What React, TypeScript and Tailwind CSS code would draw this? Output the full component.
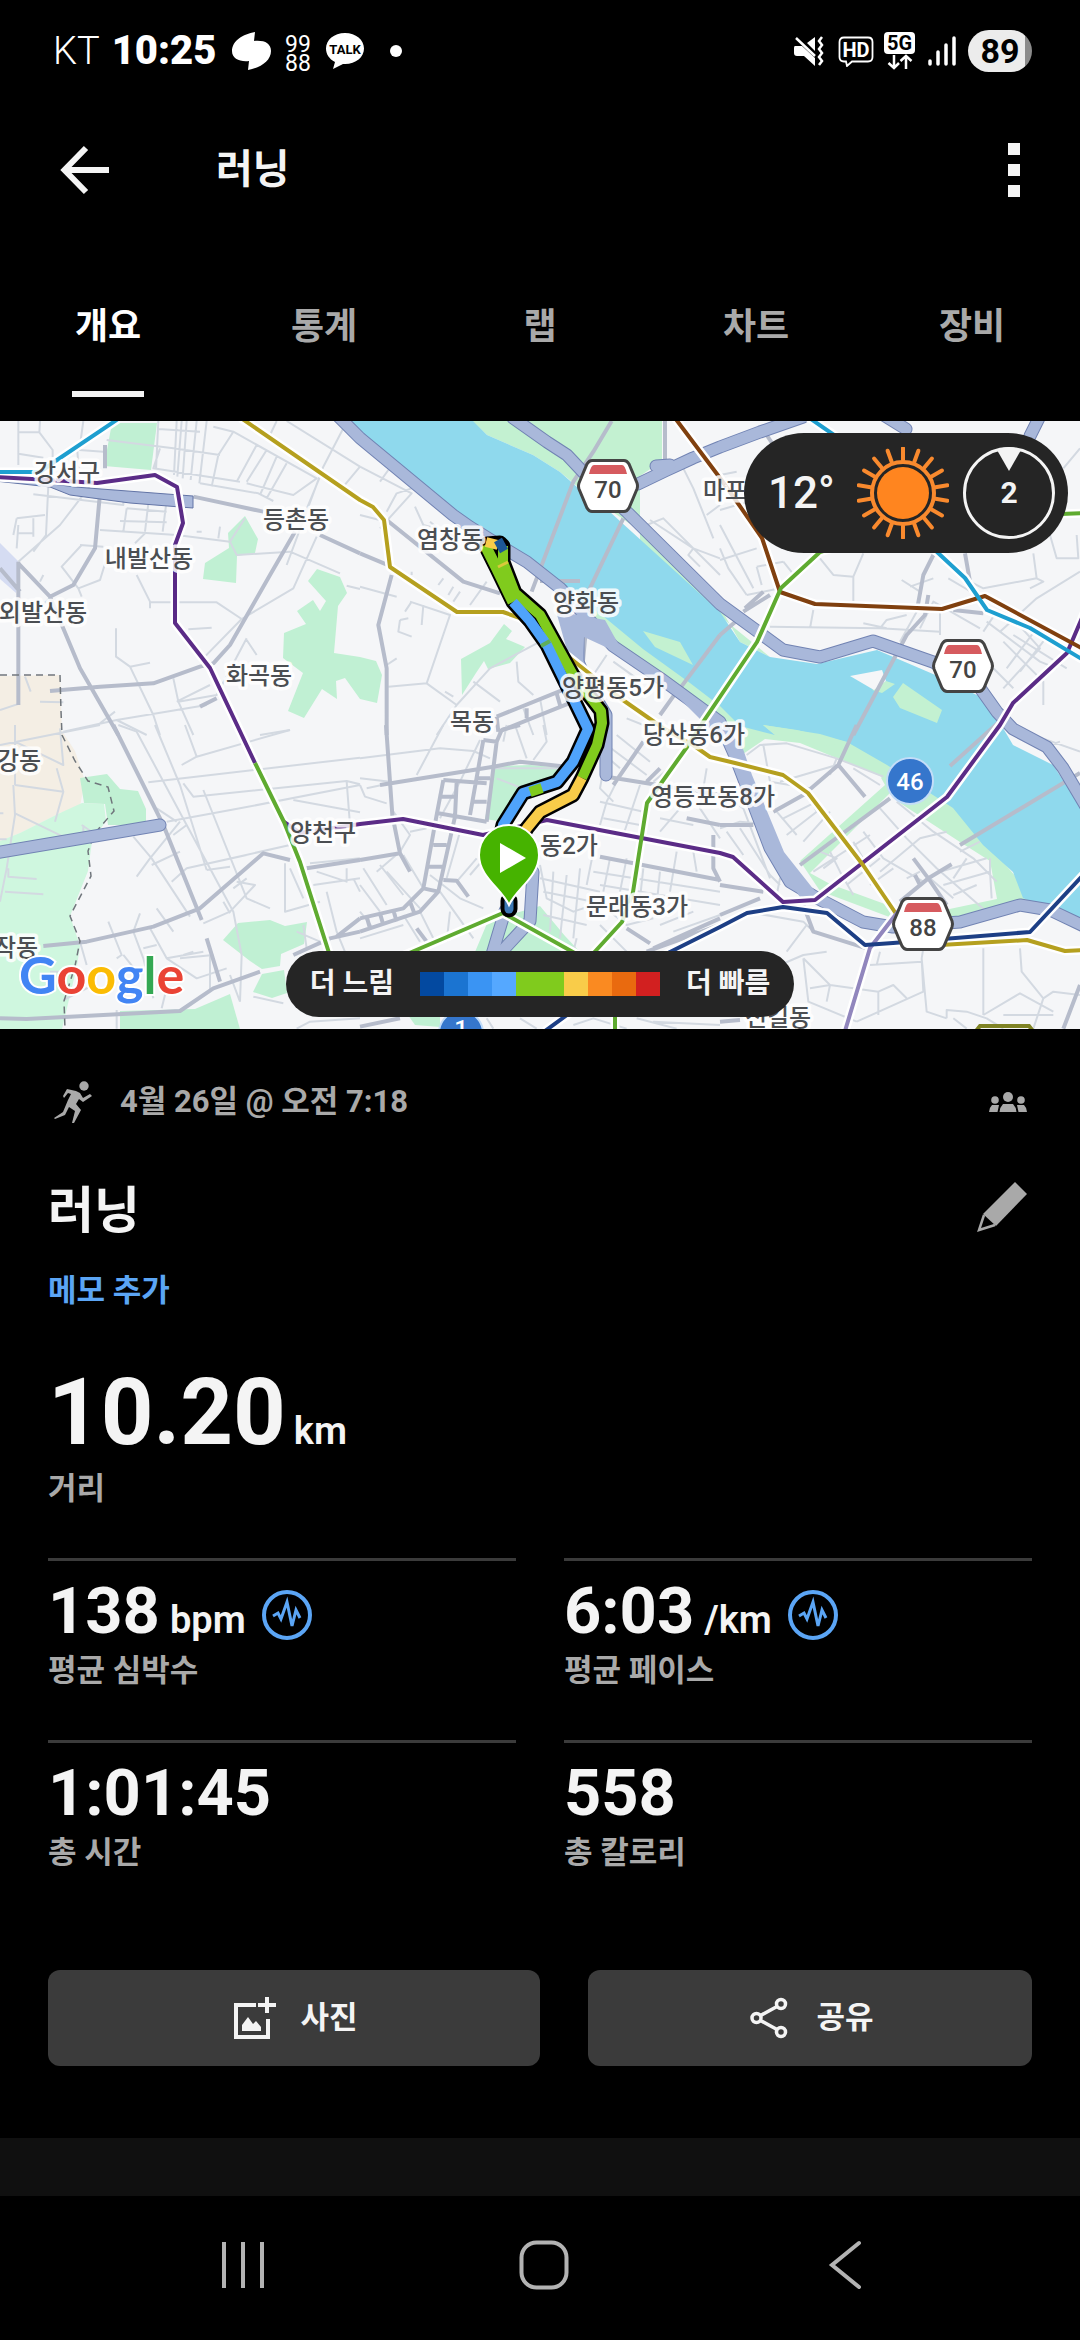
import { useState } from "react";

const TABS = ["개요", "통계", "랩", "차트", "장비"];

const PACE_COLORS = [
  "bg-[#0349a0]",
  "bg-[#1b74d1]",
  "bg-[#3a94f3]",
  "bg-[#55a8ff]",
  "bg-[#80cb1d]",
  "bg-[#80cb1d]",
  "bg-[#f9cc49]",
  "bg-[#fa8a21]",
  "bg-[#e96a0f]",
  "bg-[#d22020]",
];

const STATS = [
  { value: "138", unit: "bpm", label: "평균 심박수", graph: true },
  { value: "6:03", unit: "/km", label: "평균 페이스", graph: true },
  { value: "1:01:45", unit: "", label: "총 시간", graph: false },
  { value: "558", unit: "", label: "총 칼로리", graph: false },
];

// Road data is stored per map tile. Every tile is 1080 units wide and drawn at a third of that.
type Tile = { x: number; y: number; minor: string; major: string };

const TILES: Tile[] = [
  {
    x: 0,
    y: -6,
    minor:
      "M55 18V150 M120 18L118 52L158 105V140 M55 52H118 M55 116L130 128 M250 18L238 105L310 110 M232 108L236 160 M475 18L468 165 M475 42L600 50 M320 75L520 100L660 120 M530 18L522 180 M545 18L532 185 M560 18L548 190 M590 18L572 195 M620 18L598 205 M640 35L700 50L655 120L635 215 M600 205L775 235L820 258 M700 50L950 190L880 240L740 205 M770 90L710 200 M800 105L740 200 M830 125L780 240 M860 145L800 250 M830 18L810 60 M860 18L1080 155 M1030 40L970 155L860 450 M1080 155L1030 215 M960 185L900 330 M480 100L460 160L720 200 M100 238L370 270V235 M145 210L138 360L100 410 M50 310L135 300 M50 310L40 360 M55 330L50 400 M100 310V365 M55 355H100 M280 200L180 330L55 440 M380 280L370 350 M380 280L500 290 M445 265L435 350 M500 255L488 350 M300 345L530 360L690 380L710 420L870 410L1020 475 M360 318L500 322 M435 355L405 385 M590 350H605 M660 335L655 370 M690 380L735 310 M245 390L185 455L235 520L300 495L320 430 M240 390L310 395 M235 520L245 545 M120 500L130 480 M410 480L450 560V580 M450 562L650 562L725 612L880 520L950 365 M725 612L600 740 M348 640V725L390 755L460 900L480 960 M390 755L450 743 M565 643L635 638 M740 675L770 720 M520 790L535 860L580 960 M530 860L630 810 M535 860L650 840L740 670 M190 950L350 915L410 945L440 960 M350 915L620 870 M300 925L345 890 M1040 512L1080 522 M120 860L190 862 M780 960L870 945 M0 885L60 865 M75 785L92 830 M85 610L160 540",
    major:
      "M580 245L790 290 M885 350L810 480L690 690L640 745L600 755L460 805L300 815L150 828 M300 235L285 400L220 510L150 545 M55 440V870 M55 445L150 545L240 760L355 960 M0 460L60 530 M960 360L1080 415 M315 90V160 M600 875L650 850",
  },
  {
    x: 360,
    y: -6,
    minor:
      "M0 155L155 235L60 340 M85 165L60 200 M155 220L110 235L80 290 M165 275L190 330L245 345 M0 300L80 320 M0 515L110 545 M210 320L240 345L330 385 M150 560L270 600L200 805L85 815 M190 570L185 630 M155 560L135 590 M120 615L115 650L155 665 M120 615L145 610 M235 510L250 490 M265 540L280 515 M280 560L300 530 M330 570L380 500 M155 480V470 M200 805L290 870L390 760L540 680 M470 740L475 800L520 840 M340 800L420 860 M80 750L110 730 M255 830L280 845 M290 870L230 960 M870 315L1000 400L985 420L1020 455 M860 330L910 310L1080 480 M970 160L1000 220L1060 370 M1040 300L1080 270 M1000 400L1080 430 M740 720L700 780 M760 740L830 790 M540 850L560 960 M490 880L520 960 M800 910L850 930L880 960",
    major:
      "M95 480L55 630L80 760V960 M80 315L310 500L420 535 M0 415L95 455 M410 905L620 820 M415 950L640 860 M410 905L415 950 M500 880V910 M590 835L600 870 M755 18L700 110L640 200L515 530 M790 310L685 530 M1080 660L960 820 M915 18V140 M680 620L665 780 M950 830L900 900",
  },
  {
    x: 720,
    y: -6,
    minor:
      "M0 180L50 170 M0 285L80 262 M0 400L25 460L80 540 M0 330L100 520 M0 435L110 400 M80 540L180 520 M110 455L125 510 M110 455L190 440 M300 430L340 480L400 485V560 M430 415L400 485 M190 440L230 490 M280 585L270 640 M150 635L480 640L660 650 M480 640L500 615L560 600 M430 625L500 640 M590 590L540 680 M545 495L600 530 M570 515L640 490 M600 640L640 560L780 640 M660 590V660 M830 590L790 650 M800 620L960 740L1010 760 M870 600L960 700L850 820 M950 640L860 760 M1000 640L900 770 M850 680L970 800V870 M880 660L1040 760 M820 760L880 820 M990 360L1010 430L1075 430L1070 360 M940 415L950 490L790 520L750 500 M950 490L970 500L930 520 M685 490L770 540 M1030 160L1080 100 M840 650L950 550L1080 470",
    major:
      "M640 420L610 480L590 590 M625 540L615 600L560 660L400 960 M735 415L750 500L770 540 M700 585L790 595 M140 60L160 90 M70 590L150 540 M75 580L130 530 M0 660L70 600",
  },
  {
    x: 0,
    y: 304,
    minor:
      "M355 0L410 20L560 300L700 560L725 690L720 830 M465 0L540 180L620 435 M555 0L590 95L870 15 M545 120L590 95 M445 172L1080 98 M550 175L580 215L1040 168L1080 178 M500 290L720 250L1080 180 M880 225L1080 262 M1040 170L1050 300 M470 250L530 290 M560 300L520 330 M540 290L450 400L410 455 M560 430L870 360 M620 435L690 425 M400 335L455 400L570 575 M455 420L540 380 M515 470L560 430L740 390 M610 195L740 520L810 550 M710 470L765 480L690 560L610 595 M670 530L690 565 M740 460L700 490 M855 415V560L960 530 M870 430L910 520 M940 480L1080 460 M1040 430V470L950 440 M1080 400L930 415 M0 60L300 0 M45 0V180 M40 180L45 270L20 430L0 530 M45 50L190 120L180 10 M45 180L190 200L170 130 M45 265L200 340 M190 200L165 290 M0 265H10 M0 343H20 M25 430V455L110 462 M15 500L130 508 M245 300L290 330 M250 300V350 M325 590L365 690L350 700 M400 620L420 565 M400 620L430 700L460 820 M470 550L520 620 M450 610L500 700L590 760L680 730 M500 700L610 680 M370 690L410 740 M430 670L470 660 M550 690L580 680 M630 690V800 M540 700L640 690 M690 750L720 830 M350 855V911 M150 740L180 740 M190 825L280 780 M485 850L500 790 M760 815L850 835 M980 500L1010 620L1080 790 M910 600L920 670 M890 620L960 650 M1060 460L1080 500 M240 650L260 720 M890 911L930 890L1080 880",
    major:
      "M340 0L490 300L605 585 M130 663L260 650L460 605L600 550L790 385L870 405 M920 430L1080 405 M0 880L80 882L540 858L640 790L780 740 M880 690L990 640L1080 620 M1010 635L1080 580 M620 640L660 770",
  },
  {
    x: 360,
    y: 304,
    minor:
      "M0 100L240 70L340 78L390 100 M250 0L170 150 M0 180L15 215L80 235 M20 190L90 175 M100 260L150 330L120 380L50 440 M360 45L300 170L240 280 M0 160L90 170 M400 130L620 130 M410 160L500 195 M550 0L560 50L520 105 M440 0L430 50 M465 0L500 100 M150 320L200 310 M60 420L130 510 M10 430L80 540 M130 390L190 490 M80 440L180 550 M210 450L300 520L370 550 M330 450L390 380 M290 470L350 400 M260 460L300 320L400 350 M240 500L340 640 M180 560L230 660 M130 570L180 650 M0 480L60 560 M0 640L130 600 M270 560L260 650 M740 60L860 150 M770 30L870 110 M700 60L780 130 M740 80L720 190L760 230 M790 130L740 230L720 300 M840 180L790 330 M720 230L850 260 M730 280L840 300 M540 420L560 520L640 560L700 540 M580 440L570 620 M620 450L600 640 M660 430L640 640 M540 460L720 500 M550 500L700 530 M550 570L680 600 M700 380L680 480 M750 400L730 500 M800 400L780 500 M850 430L840 520 M900 440L890 540 M700 440L1080 500 M720 480L1080 540 M950 380L930 500 M1000 380L1010 440 M1040 130L1020 250L1080 340 M880 170L950 110 M900 280L1000 300 M960 250L900 320 M750 560L800 600L880 580 M900 600L1000 560 M940 620L1080 570 M650 640L640 680 M720 600L800 680 M0 560L40 610 M640 900L700 880L800 911 M830 880L950 911 M880 890L1080 900 M380 880L400 911 M480 880L530 911",
    major:
      "M78 0L97 270L120 385L150 440 M0 405L120 385 M60 180L400 125L480 110L620 125 M370 45L330 270 M410 50L380 290 M370 45L410 50 M425 15L410 50 M425 15L480 0 M350 160H390 M335 230H380 M250 165L230 270L190 490 M290 170L285 275L235 500 M250 165L380 175 M235 265L380 290 M235 215H290 M220 360H260 M205 425H250 M190 490L235 500L180 560L0 620 M190 490L130 550L0 580 M20 575L30 610 M60 565L70 600 M100 555L110 590 M150 530L165 570 M250 465L290 467L325 515 M720 395L1080 465 M740 155L1080 210 M850 50L760 180 M1060 330V430L1080 470 M880 670L1080 580 M800 610L870 655 M860 680L1080 600 M980 280L1080 300 M860 170L900 130 M0 905L120 880 M170 610L200 650",
  },
  {
    x: 720,
    y: 304,
    minor:
      "M80 90L120 60L200 55L350 100L490 155 M130 60L150 170L270 190 M180 170L350 120 M350 100L330 150 M400 130L480 180 M170 260L230 330 M190 280L290 230 M200 330L290 260L270 220 M250 350L330 260 M280 440L450 330 M330 380L360 440L400 510 M310 430L350 400L300 380 M400 350L470 470 M430 320L490 400L610 470 M480 250L560 340L650 430L800 560 M530 230L640 320L760 400L830 470 M380 480L480 400 M480 440L600 340L680 320 M450 480L520 430 M720 380L780 350 M560 460L600 440 M630 460L700 520 M660 440L800 400 M670 480L810 440L815 520 M740 400L700 460 M810 400V440 M700 510L770 480 M0 310L60 290L110 295 M20 320L70 390 M60 310L150 450L180 480 M0 200L70 250L150 460 M80 560L250 590L270 610 M250 700L330 780L475 800V870 M250 700L265 830L410 890 M180 720L250 690L320 680 M270 790L330 780L320 830 M475 800L520 780L560 820 M410 890L610 800L605 700L620 860L680 880 M450 720L605 710 M480 680L470 720 M610 670L605 700 M790 670V870 M900 670L905 740L970 820L940 911 M790 870L900 805L1000 860 M680 880V855L740 860L800 880L850 911 M970 820L1000 800L1080 810 M850 870L1000 870 M700 880L740 911 M170 510L180 460L220 470 M200 680L260 600 M910 20L1080 80 M960 70L1020 50",
    major:
      "M240 420L510 220 M410 0L355 120L435 215 M355 120L250 210L160 260 M580 400L625 460L680 540 M625 460L695 418 M585 450L600 480 M0 300L100 300 M0 480L130 500 M0 570L120 520 M270 600L280 620L440 670 M625 460L540 530 M1080 780L1030 911 M0 890L60 885 M250 540L280 620",
  },
];

const HIGHWAYS = [
  "M335 -8L360 17L453 94L470 106L507 129L527 141L560 167L593 203L613 225L660 257L720 301L735 335L770 427L790 461L817 477L863 501L893 506L960 501L1020 484L1050 489L1090 508",
  "M513 -3L547 21L567 34L583 51L627 91L720 183L753 207L783 229L820 236L873 220L933 241L980 267L997 291L1013 308L1047 326L1063 347L1085 384",
  "M638 63L665 50L693 37L720 26L760 11L803 -4",
  "M656 45L670 44",
  "M578 216L578 241L592 271L606 294V354",
  "M1030 15L1040 -5",
  "M885 -5L906 8",
  "M-5 432L160 404",
  "M533 451L530 500L493 540",
  "M505 490L490 540",
];

const SUBWAYS: { d: string; color: string }[] = [
  { d: "M-5 56L50 59L97 62L155 54L177 66L183 102L175 124V202L210 247L255 342", color: "#5b2c87" },
  { d: "M-5 51H40L57 39L118 -2", color: "#1e9fd0" },
  { d: "M284 401L300 412L360 403L403 398L483 414L547 399L720 432L733 436L783 481L815 479L947 376L1000 304L1013 282L1067 232L1085 190", color: "#5b2c87" },
  { d: "M255 342L284 401L300 441L330 535", color: "#5fab30" },
  { d: "M241 -3L360 79L373 86L384 99L390 146L457 191H503L520 197L620 277L663 307L693 324L710 336L735 342L783 354L808 372L863 444L903 503", color: "#b5a01f" },
  { d: "M923 525L1027 519L1065 530L1085 529", color: "#b5a01f" },
  { d: "M675 -3L720 57L737 81L762 117L780 171L815 183L942 188L985 175L1085 229", color: "#80400f" },
  { d: "M808 -4L850 25L937 131L965 157L987 189L1030 207L1085 240", color: "#1e9fd0" },
  { d: "M1085 92L930 98L820 131L781 167L757 221L703 301L687 326L662 361L647 382L633 471L622 501L590 536", color: "#5fab30" },
  { d: "M400 536L503 492L580 535", color: "#5fab30" },
  { d: "M615 590V610", color: "#5fab30" },
  { d: "M845 610L870 527L900 488", color: "#9186bd" },
  { d: "M545 610L567 594L670 531L720 506L747 492L783 486L827 492L865 524L893 522L1030 511L1085 452", color: "#1d3f85" },
];

const PLACES: [string, number, number][] = [
  ["강서구", 67, 60],
  ["등촌동", 296, 107],
  ["내발산동", 149, 146],
  ["외발산동", 43, 200],
  ["화곡동", 259, 263],
  ["염창동", 450, 127],
  ["양화동", 586, 190],
  ["양평동5가", 613, 275],
  ["목동", 472, 309],
  ["당산동6가", 694, 322],
  ["영등포동8가", 713, 384],
  ["동2가", 569, 433],
  ["문래동3가", 637, 494],
  ["양천구", 323, 420],
  ["강동", 19, 348],
  ["작동", 16, 535],
  ["신길동", 778, 605],
  ["마포구", 736, 78],
];

function Shield({ x, y, label }: { x: number; y: number; label: string }) {
  return (
    <g transform={`translate(${x} ${y})`}>
      <path
        d="M-16 -25.500H16Q19 -25.500 21 -22L29 -3Q30 0 29 3L21 22Q19 25.500 16 25.500H-16Q-19 25.500 -21 22L-29 3Q-30 0 -29 -3L-21 -22Q-19 -25.500 -16 -25.500Z"
        fill="#fff"
        stroke="#444"
        strokeWidth="3"
      />
      <path d="M-14 -21H14Q17 -21 19 -12H-19Q-17 -21 -14 -21Z" fill="#d65b5f" />
      <text y="12" textAnchor="middle" fontSize="24" fontWeight="500" fill="#444">
        {label}
      </text>
    </g>
  );
}

function RouteMap() {
  return (
    <svg
      viewBox="0 0 1080 608"
      preserveAspectRatio="xMidYMid slice"
      className="h-full w-full"
      role="img"
      aria-label="러닝 경로"
    >
      <rect width="1080" height="608" fill="#f5f6f8" />

      {/* Land use */}
      <path d="M0 255L60 254L62 310L75 330L85 360L80 385L60 392L20 412L0 420Z" fill="#f4eee4" />
      <path d="M0 420L20 412L60 392L82 382L104 383L106 400L92 420L88 450L70 495L80 525L77 545L62 608H0Z" fill="#cff7df" />
      <path d="M80 357L107 353L120 368L138 370L146 388L146 404L108 404L105 383L84 382Z" fill="#c0f0d3" />
      <path d="M0 122L18 140L16 172L0 158Z" fill="#d5dcf2" />
      <g fill="#c0f0d3">
        <path d="M112 2H157L151 49L104 45Z" />
        <path d="M245 95L258 118L255 132L237 135L236 162L203 158L205 142L229 127L228 112Z" />
        <path d="M317 148L340 156L347 172L338 185L334 232L360 236V278L345 257L336 260L337 278L322 268L304 297L288 290L303 252L283 237L284 212L306 203L297 190L313 179L320 190L326 180L308 160Z" />
        <path d="M360 236L376 240L382 254L377 282L360 278Z" />
        <path d="M504 203L512 210L506 218L525 226L510 242L488 248L484 240L476 252L462 274L461 238L490 222Z" />
        <path d="M495 345L530 344L565 347L545 365L520 366L498 400L485 398Z" />
        <path d="M223 519L238 502L270 499L285 505L307 501L304 523L281 533L280 545L262 548L250 540Z" />
        <path d="M262 553L284 549L287 572L272 577L253 571Z" />
        <path d="M120 608V590L195 588L230 573L240 608Z" />
        <path d="M408 594L440 594L440 606L415 604Z" />
        <path d="M488 500L540 485L565 515L580 531H475Z" />
      </g>
      <path d="M472 0L487 14L533 34L560 51L583 70L640 110L720 186L740 221L770 236L640 130L640 55L662 40V0Z" fill="#c3f1d1" />
      <path d="M750 290L797 290L860 315L940 355L985 420L1035 478L960 500L900 500L820 470L800 440L885 364L880 355L800 322L765 318L740 335Z" fill="#c3f1d1" />
      <path d="M360 10L480 100L470 108Z M540 150L600 190L720 280L760 310L720 300L600 215Z" fill="#c3f1d1" />
      <path d="M755 328L770 321H788L837 337L882 356L868 366L800 422L775 380Z M810 452L890 372L900 382L960 421L990 440L997 478L940 490L893 486L830 463Z" fill="#f5f6f8" />

      {/* River */}
      <path
        d="M346 -2H471L487 14L533 34L560 51L577 66L610 91L643 121L720 191L740 221L770 236L817 243L877 229L933 253L983 277L1003 307L1013 324L1053 344L1082 388V503L1023 477L1013 451L983 424L953 387L933 374L887 344L847 321L797 309L763 304L775 314L740 305L720 285L690 262L643 228L603 195L567 171L540 154L507 127L470 104L420 61Z"
        fill="#8fd9ed"
      />
      <path d="M643 210L680 221L693 244L655 226Z M903 262L942 289L937 302L900 287L893 276Z M763 304L820 313L847 321L830 325L780 318Z M886 260L895 263L882 272L872 269Z" fill="#c3f1d1" />
      <path d="M850 255L882 249L886 260L874 269Z" fill="#f5f6f8" />

      {/* Streets */}
      {TILES.map((tile) => (
        <g
          key={`${tile.x}-${tile.y}`}
          transform={`translate(${tile.x} ${tile.y}) scale(0.33333)`}
          fill="none"
          strokeLinejoin="round"
        >
          <path d={tile.minor} stroke="#d3d9e1" strokeWidth="6" />
          <path d={tile.major} stroke="#b6bccb" strokeWidth="12" />
        </g>
      ))}
      <path d="M580 160L540 160M1000 300L950 345M1080 352L960 424" stroke="#b6bccb" strokeWidth="4" />
      <path
        d="M0 254L60 254L61 290L62 314L75 340L88 360L108 366L114 390L95 412L88 430L91 455L70 495L80 520L75 545L64 580L65 608"
        fill="none"
        stroke="#70767c"
        strokeWidth="1.500"
        strokeDasharray="7 5"
      />

      {/* Expressways */}
      <path d="M-5 57L45 62L75 66L193 75V87L130 82L70 74L50 66L-5 60Z" fill="#a9b8da" stroke="#6274a6" strokeWidth="1" />
      <g fill="none" strokeLinejoin="round" strokeLinecap="round">
        {HIGHWAYS.map((d) => (
          <path key={d} d={d} stroke="#7183b3" strokeWidth="13" />
        ))}
        {HIGHWAYS.map((d) => (
          <path key={d} d={d} stroke="#a9b8da" strokeWidth="11" />
        ))}
      </g>
      <path d="M556 190L605 199L625 235L584 216L581 262L570 240Z" fill="#a9b8da" />
      <path d="M664 262L720 300L742 325L752 354L784 431L818 474L800 476L767 427L737 347L724 322Z" fill="#a9b8da" />

      {/* Subway lines */}
      <g fill="none" strokeLinejoin="round">
        {SUBWAYS.map((line) => (
          <path key={line.d} d={line.d} stroke="#fff" strokeWidth="9" />
        ))}
        {SUBWAYS.map((line) => (
          <path key={line.d} d={line.d} stroke={line.color} strokeWidth="4" />
        ))}
      </g>

      {/* Run route, slower stretches blue and faster stretches yellow */}
      <g fill="none" strokeLinejoin="round">
        <path
          d="M487 123L500 122L503 125V141L515 172L540 194L573 254L601 290L602 302L597 324L582 357L573 374L540 391L527 407L510 435 M486 126L497 148L513 181L530 200L547 224L573 277L588 308L573 341L557 361L523 372L503 404L497 430"
          stroke="#000"
          strokeWidth="15"
          strokeLinecap="round"
        />
        <path d="M503 125V141L515 172L540 194L573 254L601 290L602 302L597 324L582 357" stroke="#80cb1d" strokeWidth="10" />
        <path d="M485 124L497 148L513 181" stroke="#80cb1d" strokeWidth="11" />
        <path d="M497 140L510 165" stroke="#80cb1d" strokeWidth="9" />
        <path d="M513 181L530 200L547 224L573 277L588 308L573 341L557 361L523 372L503 404L497 430" stroke="#4fa3fb" strokeWidth="10" />
        <path d="M582 357L573 374L540 391L527 407L515 425" stroke="#f9cc49" strokeWidth="10" />
        <path d="M530 371L542 367" stroke="#80cb1d" strokeWidth="10" />
        <path d="M541 225L550 220" stroke="#5fae5a" strokeWidth="4" />
        <path d="M498 146L508 141" stroke="#d9c83a" strokeWidth="3" />
        <path d="M486 121L498 124" stroke="#f9cc49" strokeWidth="10" />
        <path d="M498 119L504 130" stroke="#1d5797" strokeWidth="9" />
        <path d="M509 480V488" stroke="#000" strokeWidth="17" strokeLinecap="round" />
        <path d="M509 480V488" stroke="#3c78b4" strokeWidth="9" strokeLinecap="round" />
      </g>

      {/* Place names */}
      <g fontSize="24" fontWeight="500" fill="#4b4e52" stroke="#fff" strokeWidth="7" strokeOpacity="0.85" strokeLinejoin="round" paintOrder="stroke" textAnchor="middle">
        {PLACES.map(([name, x, y]) => (
          <text key={name} x={x} y={y}>
            {name}
          </text>
        ))}
      </g>

      <Shield x={608} y={65} label="70" />
      <Shield x={963} y={245} label="70" />
      <Shield x={923} y={503} label="88" />
      <g fontSize="24" fontWeight="500" fill="#fff" textAnchor="middle">
        <circle cx="910" cy="360" r="23" fill="#3576cc" stroke="#c3ddf8" strokeWidth="2" />
        <text x="910" y="369">46</text>
        <circle cx="461" cy="612" r="22" fill="#3576cc" stroke="#c3ddf8" strokeWidth="2" />
        <text x="461" y="616">1</text>
      </g>
      <path d="M976 610L980 605H1029L1033 610" fill="none" stroke="#7f8324" strokeWidth="4" />

      {/* Start marker */}
      <path
        d="M509 484C502 468 479 456 479 434A30 30 0 0 1 539 434C539 456 516 468 509 484Z"
        fill="#46b300"
        stroke="#fff"
        strokeWidth="2"
      />
      <path d="M500 422V452L526 437Z" fill="#fff" />

      <text x="19" y="573" fontSize="52" fontWeight="700" stroke="#fff" strokeWidth="4" paintOrder="stroke" style={{ fontFamily: "Lato, sans-serif" }}>
        <tspan fill="#4285f4">G</tspan>
        <tspan fill="#ea4335">o</tspan>
        <tspan fill="#fbbc04">o</tspan>
        <tspan fill="#4285f4">g</tspan>
        <tspan fill="#34a853">l</tspan>
        <tspan fill="#ea4335">e</tspan>
      </text>
    </svg>
  );
}

function SunIcon() {
  // 18 rays, one every 20 degrees
  const rays = Array.from({ length: 18 }, (_, i) => i * 20);
  return (
    <svg viewBox="-46 -46 92 92" className="size-[92px]" aria-hidden="true">
      <circle r="26" fill="#ff851f" />
      <circle r="31" fill="none" stroke="#f98a2e" strokeWidth="4" />
      {rays.map((deg) => (
        <path key={deg} d="M0 -33V-45" stroke="#f98a2e" strokeWidth="4" strokeLinecap="round" transform={`rotate(${deg})`} />
      ))}
    </svg>
  );
}

function StatusBar() {
  return (
    <div className="flex h-[102px] items-center pr-12 pl-[53px] text-white">
      <span className="text-[38px] leading-[44px] font-light">KT</span>
      <span className="ml-3 text-[40px] leading-[44px] font-black">10:25</span>
      <svg viewBox="0 0 40 38" className="ml-4 h-[38px] w-10" fill="currentColor" aria-hidden="true">
        <path d="M23 0C11 2 0 9 0 19C0 27 8 30 17 29L16 38C28 36 39 29 39 19C39 11 32 8 22 9Z" />
      </svg>
      <svg viewBox="0 0 28 52" className="ml-3 h-[52px] w-7" fill="currentColor" fontSize="23" textAnchor="middle">
        <text x="14" y="27">99</text>
        <text x="14" y="46">88</text>
      </svg>
      <svg viewBox="0 0 38 36" className="ml-[14px] h-9 w-[38px]" aria-hidden="true">
        <path d="M19 0C30 0 38 7 38 15.500S30 31 19 31H17L7 36L9 29C3 26 0 21 0 15.500C0 7 8 0 19 0Z" fill="currentColor" />
        <text x="19" y="21" textAnchor="middle" fontSize="13" fontWeight="700" fill="#000">TALK</text>
      </svg>
      <span className="ml-[26px] size-3 rounded-full bg-white" />

      <svg viewBox="0 0 30 30" className="ml-auto h-[30px] w-[30px]" aria-hidden="true">
        <path d="M1 10H8L21 22V30L10 20H3Q0 20 0 17V12Q0 10 1 10Z M13 7L21 1V15Z" fill="currentColor" />
        <path d="M2 2L21 20 M28 1L25 5L28 9L25 13L28 17L25 21L28 25L25 29" fill="none" stroke="currentColor" strokeWidth="2.500" />
      </svg>
      <svg viewBox="0 0 36 31" className="ml-[14px] h-[31px] w-9" aria-hidden="true">
        <path d="M6 1.500H30Q34.500 1.500 34.500 6V21Q34.500 25.500 30 25.500H14L9 30L8 25.500H6Q1.500 25.500 1.500 21V6Q1.500 1.500 6 1.500Z" fill="none" stroke="currentColor" strokeWidth="1.800" />
        <text x="18" y="20.500" textAnchor="middle" fontSize="20" fontWeight="700" fill="currentColor">HD</text>
      </svg>
      <svg viewBox="0 0 32 38" className="ml-[10px] h-[38px] w-8" aria-hidden="true">
        <rect width="31" height="22" rx="4" fill="currentColor" />
        <text x="15.500" y="18" textAnchor="middle" fontSize="20" fontWeight="700" fill="#000">5G</text>
        <path d="M10 23V36 M4.500 31L10 36L15 31 M22 37V24 M16.500 29L22 24L27.500 29" fill="none" stroke="currentColor" strokeWidth="2.500" />
      </svg>
      <svg viewBox="0 0 28 30" className="ml-3 h-[30px] w-7" stroke="currentColor" strokeWidth="3.500" strokeLinecap="round" aria-hidden="true">
        <path d="M2 25V28M10 16V28M18 9V28M26 2V28" />
      </svg>
      <span className="ml-3 flex h-[42px] w-16 items-center justify-center rounded-full bg-linear-to-r from-[#ececec] from-89% to-[#8b8b8b] to-89% text-[34px] leading-[42px] font-bold text-black">
        89
      </span>
    </div>
  );
}

function GraphButton({ label }: { label: string }) {
  return (
    <button type="button" aria-label={`${label} 차트`} className="ml-4 self-center pt-2">
      <svg viewBox="0 0 50 50" className="size-[50px]" fill="none" stroke="#5ba5f5" aria-hidden="true">
        <circle cx="25" cy="25" r="23" strokeWidth="4" />
        <path d="M11 26L16 23L19 29L25 12L30 36L34 20L38 28" strokeWidth="3" />
      </svg>
    </button>
  );
}

export default function App() {
  const [activeTab, setActiveTab] = useState(TABS[0]);

  return (
    <div className="min-h-screen bg-black text-[#f4f4f4] [font-family:Roboto,'Noto_Sans_CJK_KR',sans-serif]">
      <StatusBar />

      <header className="flex h-[136px] items-center px-[60px]">
        <button type="button" aria-label="뒤로">
          <svg viewBox="0 0 50 50" className="size-[50px]" fill="none" stroke="currentColor" strokeWidth="6" aria-hidden="true">
            <path d="M49 25H5 M26 3L4.500 25L26 47" />
          </svg>
        </button>
        <h1 className="ml-[106px] text-[40px] leading-[48px] font-bold">러닝</h1>
        <button type="button" aria-label="더보기" className="ml-auto flex flex-col gap-[9px]">
          <span className="size-3 bg-current" />
          <span className="size-3 bg-current" />
          <span className="size-3 bg-current" />
        </button>
      </header>

      <div role="tablist" className="grid h-[183px] grid-cols-5">
        {TABS.map((tab) => (
          <button
            key={tab}
            type="button"
            role="tab"
            aria-selected={tab === activeTab}
            onClick={() => setActiveTab(tab)}
            className={`flex flex-col items-center justify-end gap-10 pb-6 text-[36px] leading-[48px] font-bold ${
              tab === activeTab ? "text-white" : "text-[#a9a9a9]"
            }`}
          >
            {tab}
            <span className={`h-[6px] w-[72px] ${tab === activeTab ? "bg-[#f4f4f4]" : "bg-transparent"}`} />
          </button>
        ))}
      </div>

      <section className="relative h-[608px] overflow-hidden">
        <RouteMap />

        {/* Weather */}
        <div className="absolute top-3 right-3 flex h-[120px] w-[324px] items-center justify-between rounded-full bg-[#252525] pr-[13px] pl-6">
          <span className="text-[44px] leading-[48px] font-medium">12°</span>
          <div className="flex gap-[14px]">
            <SunIcon />
            <div className="relative flex size-[92px] items-center justify-center rounded-full border-3 border-[#f4f4f4]">
              <svg viewBox="0 0 24 24" className="absolute -top-[3px] size-6" fill="currentColor" aria-hidden="true">
                <path d="M0 3Q12 -3 24 3L12 24Z" />
              </svg>
              <span className="text-[30px] leading-[36px] font-bold">2</span>
            </div>
          </div>
        </div>

        {/* Pace legend */}
        <div className="absolute inset-x-0 bottom-3 flex justify-center">
          <div className="flex h-[66px] items-center gap-[26px] rounded-full bg-[#252525] px-6 text-[28px] leading-[36px] font-bold">
            <span>더 느림</span>
            <div className="flex">
              {PACE_COLORS.map((color, i) => (
                <span key={i} className={`size-6 ${color}`} />
              ))}
            </div>
            <span>더 빠름</span>
          </div>
        </div>
      </section>

      <main className="px-12 pt-12 pb-[72px]">
        <div className="flex h-[50px] items-center text-[#a9a9a9]">
          <svg viewBox="0 0 38 42" className="ml-[6px] h-[42px] w-[38px]" fill="currentColor" aria-hidden="true">
            <circle cx="30" cy="5" r="4.700" />
            <path d="M13 8L22 10L26 12L29 17L36 13L38 15L29 21L25 18L22 23L27 29L20 42H18L21 30L15 26L11 34L1 38L0 37L9 31L14 19L17 13L14 12L10 17L9 15Z" />
          </svg>
          <span className="ml-7 text-[31px] leading-[40px] font-bold">4월 26일 @ 오전 7:18</span>
          <svg viewBox="0 0 38 22" className="mr-[5px] ml-auto h-[22px] w-[38px]" fill="currentColor" aria-hidden="true">
            <circle cx="19" cy="6" r="5" />
            <circle cx="6" cy="9" r="3.800" />
            <circle cx="32" cy="9" r="3.800" />
            <path d="M14 13H24Q27 16 27.500 21H10.500Q11 16 14 13Z M3 14H10L8.500 21H0Q0 17 3 14Z M28 14H35Q38 17 38 21H29.500Z" />
          </svg>
        </div>

        <div className="mt-[50px] flex h-[60px] items-center justify-between">
          <h2 className="pt-2 text-[50px] leading-[60px] font-bold">러닝</h2>
          <button type="button" aria-label="이름 편집" className="mr-[5px] text-[#a9a9a9]">
            <svg viewBox="0 0 50 50" className="size-[50px]" aria-hidden="true">
              <path d="M38 0L50 12L19 44L6 32Z" fill="currentColor" />
              <path d="M7 33L2 48L18 43" fill="none" stroke="currentColor" strokeWidth="2.500" />
            </svg>
          </button>
        </div>
        <a href="#memo" className="mt-[34px] block text-[31px] leading-[40px] font-bold text-[#5ba5f5]">
          메모 추가
        </a>

        <div className="mt-[54px] flex items-baseline gap-2">
          <span className="text-[92px] leading-[96px] font-bold">10.20</span>
          <span className="text-[38px] leading-[48px] font-semibold">km</span>
        </div>
        <p className="mt-2 text-[31px] leading-[40px] font-bold text-[#a9a9a9]">거리</p>

        <div className="mt-[49px] grid auto-rows-[182px] grid-cols-2 gap-x-12">
          {STATS.map((stat) => (
            <div key={stat.label} className="border-t-3 border-[#3b3b3b] pt-[14px]">
              <div className="flex h-[72px] items-baseline">
                <span className="text-[65px] leading-[72px] font-bold">{stat.value}</span>
                {stat.unit && <span className="ml-[10px] text-[38px] leading-[48px] font-semibold">{stat.unit}</span>}
                {stat.graph && <GraphButton label={stat.label} />}
              </div>
              <p className="mt-1 text-[31px] leading-[40px] font-bold text-[#a9a9a9]">{stat.label}</p>
            </div>
          ))}
        </div>

        <div className="mt-12 grid grid-cols-[492fr_444fr] gap-12 text-[31px] leading-[40px] font-bold">
          <button type="button" className="flex h-24 items-center justify-center gap-6 rounded-xl bg-[#3b3b3b] pl-1">
            <svg viewBox="0 0 42 42" className="size-[42px]" fill="none" stroke="currentColor" strokeWidth="4" aria-hidden="true">
              <path d="M22 8H2V40H34V22 M24 8H42 M33 0V16" />
              <path d="M8 34V28L14 20L19 27L22 24L27 30V34Z" fill="currentColor" stroke="none" />
            </svg>
            사진
          </button>
          <button type="button" className="flex h-24 items-center justify-center gap-7 rounded-xl bg-[#3b3b3b] pl-1">
            <svg viewBox="0 0 38 42" className="h-[42px] w-[38px]" fill="none" stroke="currentColor" strokeWidth="3.500" aria-hidden="true">
              <circle cx="31" cy="7" r="4.500" />
              <circle cx="6.500" cy="21" r="4.500" />
              <circle cx="31" cy="35" r="4.500" />
              <path d="M10.500 18.500L27 9.500M10.500 23.500L27 32.500" />
            </svg>
            공유
          </button>
        </div>
      </main>

      <div className="h-[58px] bg-[#101010]" />

      <nav className="grid h-[144px] grid-cols-3 place-items-center pr-[84px] pb-[6px] pl-[92px] text-[#b3b3b3]">
        <button type="button" aria-label="최근 앱">
          <svg viewBox="0 0 50 50" className="size-[50px]" fill="none" stroke="currentColor" strokeWidth="4" aria-hidden="true">
            <path d="M6 2V48M25 2V48M44 2V48" />
          </svg>
        </button>
        <button type="button" aria-label="홈">
          <svg viewBox="0 0 50 50" className="size-[50px]" fill="none" stroke="currentColor" strokeWidth="4" aria-hidden="true">
            <rect x="2.500" y="2.500" width="45" height="45" rx="15" />
          </svg>
        </button>
        <button type="button" aria-label="이전">
          <svg viewBox="0 0 50 50" className="size-[50px]" fill="none" stroke="currentColor" strokeWidth="4" strokeLinecap="round" aria-hidden="true">
            <path d="M39 3L12 25L39 47" />
          </svg>
        </button>
      </nav>
    </div>
  );
}
